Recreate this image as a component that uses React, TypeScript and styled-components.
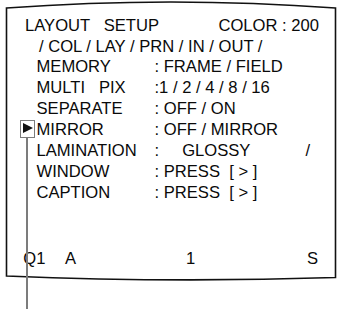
import styled, { createGlobalStyle } from "styled-components";

const GlobalStyle = createGlobalStyle`
  html, body {
    margin: 0;
    padding: 0;
    background: #ffffff;
  }
`;

const Screen = styled.div`
  position: relative;
  width: 342px;
  height: 309px;
  overflow: hidden;
  font-family: "Liberation Sans", Arial, sans-serif;
  font-size: 16.6px;
  line-height: 20.9px;
  color: #0a0a0a;
`;

const FrameArt = styled.svg`
  position: absolute;
  inset: 0;
  pointer-events: none;
`;

const Menu = styled.div`
  position: relative;
  padding-top: 15.6px;
`;

const Header = styled.div`
  display: flex;
  justify-content: space-between;
  padding: 0 23px 0 25px;
  white-space: pre;
`;

const Tabs = styled.div`
  padding-left: 39px;
  white-space: pre;
`;

const OptionRow = styled.div`
  position: relative;
  display: grid;
  grid-template-columns: 118px auto;
  padding-left: 36.5px;
  white-space: pre;
`;

const Marker = styled.span`
  position: absolute;
  left: 20px;
  top: 0;
  width: 12.7px;
  height: 15.6px;
  border: 1.5px solid #7c7c7c;

  &::before {
    content: "";
    position: absolute;
    left: 1.6px;
    top: 2.3px;
    border-left: 10px solid #111;
    border-top: 5.6px solid transparent;
    border-bottom: 5.6px solid transparent;
  }

  &::after {
    content: "";
    position: absolute;
    left: 5.4px;
    top: 17.1px;
    width: 1.7px;
    height: 190px;
    background: #7c7c7c;
  }
`;

const Status = styled.div`
  display: grid;
  grid-template-columns: 41.7px 121px 121px auto;
  margin-top: 45px;
  padding-left: 23.3px;
`;

interface Option {
  label: string;
  value: string;
  selected?: boolean;
}

const options: Option[] = [
  { label: "MEMORY", value: ": FRAME / FIELD" },
  { label: "MULTI   PIX", value: ":1 / 2 / 4 / 8 / 16" },
  { label: "SEPARATE", value: ": OFF / ON" },
  { label: "MIRROR", value: ": OFF / MIRROR", selected: true },
  { label: "LAMINATION", value: ":     GLOSSY            /" },
  { label: "WINDOW", value: ": PRESS  [ > ]" },
  { label: "CAPTION", value: ": PRESS  [ > ]" },
];

const App = () => {
  return (
    <Screen>
      <GlobalStyle />
      <FrameArt width="342" height="309" viewBox="0 0 342 309">
        <path
          d="M 6.5 8 Q 171 -4 335.5 8 L 335.5 277.5 Q 171 283 6.5 276 Z"
          fill="none"
          stroke="#111"
          strokeWidth="1.6"
        />
      </FrameArt>
      <Menu>
        <Header>
          <span>{"LAYOUT   SETUP"}</span>
          <span>COLOR : 200</span>
        </Header>
        <Tabs>/ COL / LAY / PRN / IN / OUT /</Tabs>
        {options.map((opt) => (
          <OptionRow key={opt.label}>
            {opt.selected && <Marker />}
            <span>{opt.label}</span>
            <span>{opt.value}</span>
          </OptionRow>
        ))}
        <Status>
          <span>Q1</span>
          <span>A</span>
          <span>1</span>
          <span>S</span>
        </Status>
      </Menu>
    </Screen>
  );
};

export default App;
